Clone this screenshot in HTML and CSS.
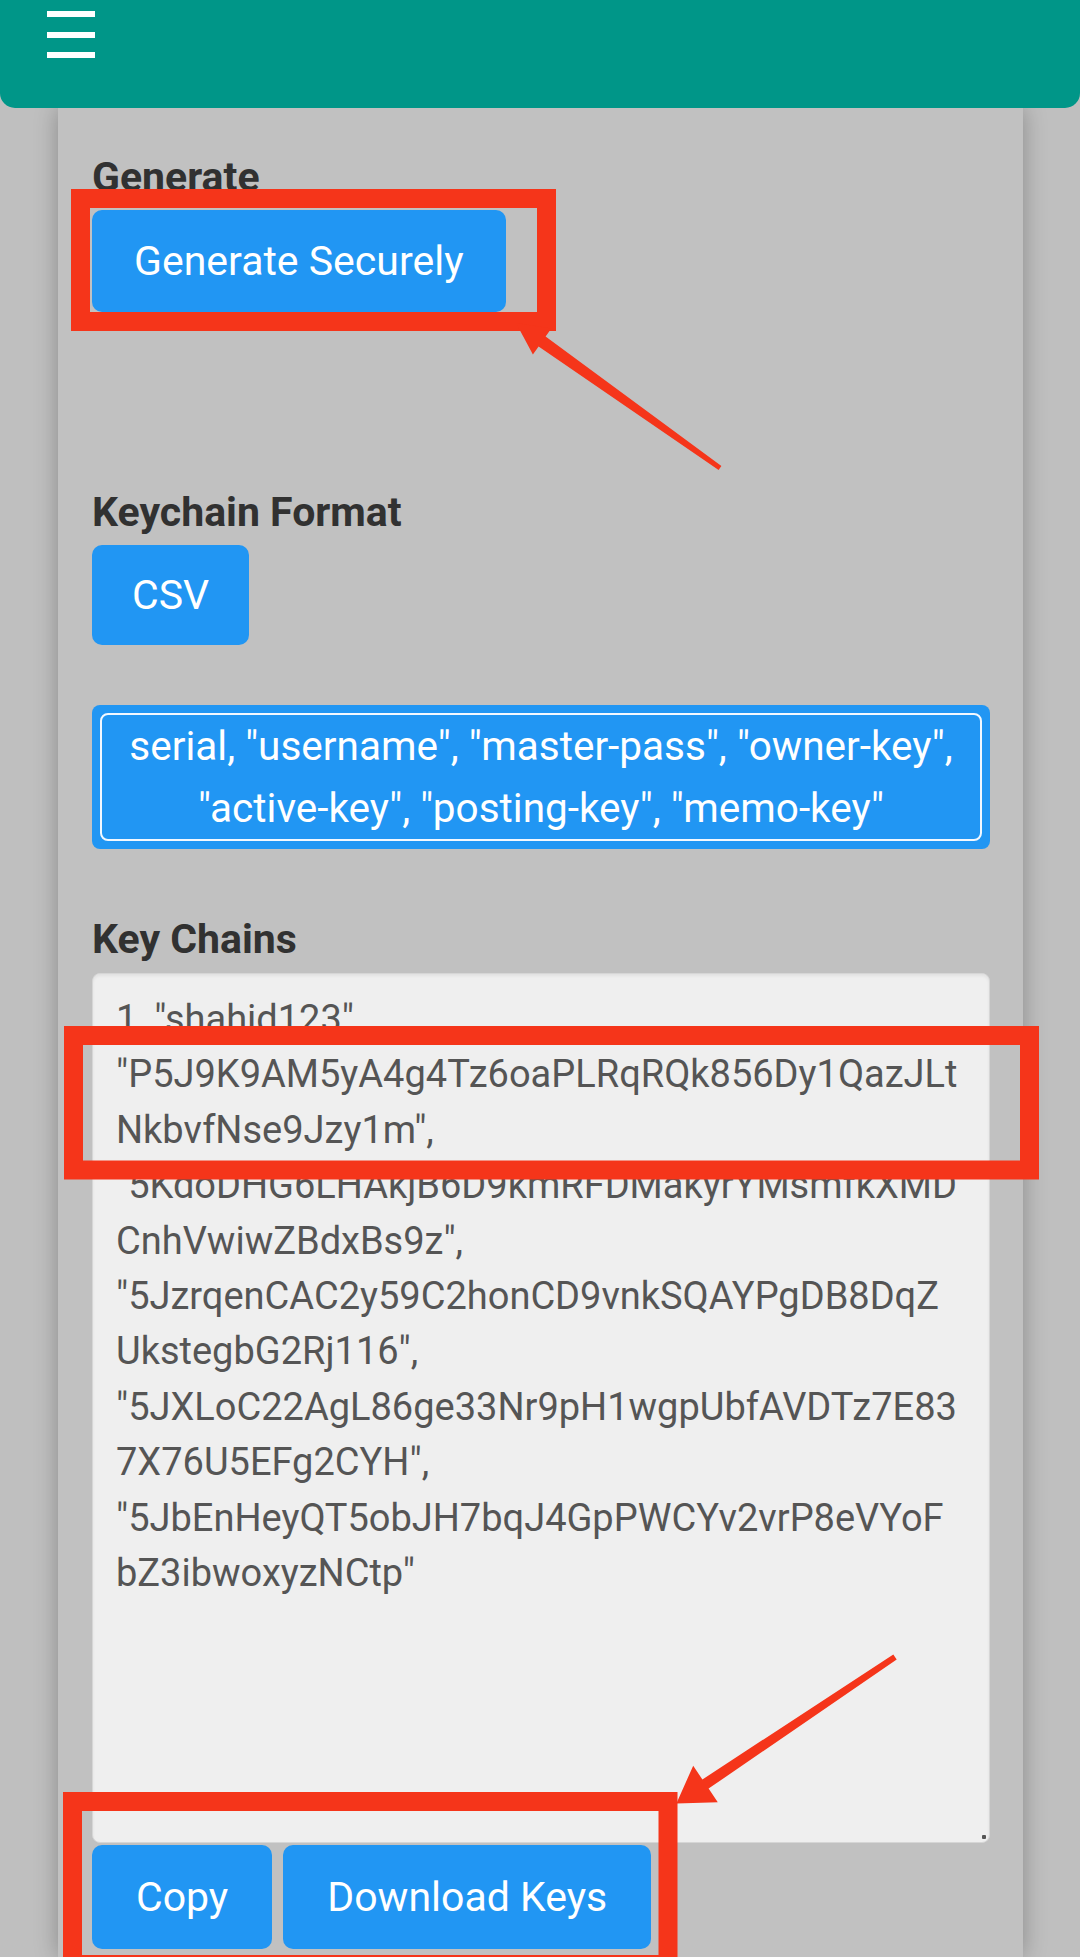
FILE: index.html
```html
<!DOCTYPE html>
<html lang="en">
<head>
<meta charset="utf-8">
<title>Keychain Generator</title>
<link rel="stylesheet" href="styles.css">
</head>
<body>
<header class="topbar">
  <div class="hamburger"><span></span><span></span><span></span></div>
</header>
<main class="card">
  <h2 class="label label-generate">Generate</h2>
  <button class="btn">Generate Securely</button>

  <h2 class="label label-format">Keychain Format</h2>
  <button class="btn btn-csv">CSV</button>

  <div class="format-box">
    <div class="format-inner">serial, "username", "master-pass", "owner-key",<br>"active-key", "posting-key", "memo-key"</div>
  </div>

  <h2 class="label label-chains">Key Chains</h2>
  <div class="keys">
    <div class="line">1, "shahid123"</div>
    <div class="line">"P5J9K9AM5yA4g4Tz6oaPLRqRQk856Dy1QazJLt</div>
    <div class="line">NkbvfNse9Jzy1m",</div>
    <div class="line">"5KdoDHG6LHAkjB6D9kmRFDMakyrYMsmfkXMD</div>
    <div class="line">CnhVwiwZBdxBs9z",</div>
    <div class="line">"5JzrqenCAC2y59C2honCD9vnkSQAYPgDB8DqZ</div>
    <div class="line">UkstegbG2Rj116",</div>
    <div class="line">"5JXLoC22AgL86ge33Nr9pH1wgpUbfAVDTz7E83</div>
    <div class="line">7X76U5EFg2CYH",</div>
    <div class="line">"5JbEnHeyQT5obJH7bqJ4GpPWCYv2vrP8eVYoF</div>
    <div class="line">bZ3ibwoxyzNCtp"</div>
  </div>
  <div class="actions">
    <button class="btn">Copy</button>
    <button class="btn">Download Keys</button>
  </div>
</main>

<svg class="annotations" width="1080" height="1957" viewBox="0 0 1080 1957" aria-hidden="true">
  <g fill="none" stroke="#f5351a" stroke-width="19">
    <rect x="80.5" y="198.5" width="466" height="123"/>
    <rect x="73.5" y="1035.5" width="956" height="134.5"/>
    <rect x="72.5" y="1801.5" width="595.5" height="163"/>
  </g>
  <g fill="#f5351a">
    <polygon points="516,323 551.3,328.4 545.6,336.6 721.4,466 718.6,470 538.6,346.4 532.9,354.6"/>
    <polygon points="676.4,1803.5 717.8,1802.3 708.6,1788.6 896.7,1659.5 893.3,1654.5 702.4,1779.4 693.2,1765.7"/>
  </g>
</svg>
</body>
</html>
```

FILE: styles.css
```css
html, body {
  margin: 0;
  padding: 0;
}

body {
  width: 1080px;
  height: 1957px;
  overflow: hidden;
  position: relative;
  background: #bfbfbf;
  font-family: Roboto, "Noto Sans", "Liberation Sans", sans-serif;
}

.topbar {
  position: relative;
  z-index: 2;
  height: 108px;
  background: #009688;
  border-radius: 0 0 15px 15px;
  box-sizing: border-box;
  padding: 11px 0 0 47px;
}

.hamburger {
  display: flex;
  flex-direction: column;
  gap: 14.5px;
  width: 48px;
}

.hamburger span {
  display: block;
  height: 6px;
  background: #ffffff;
}

.card {
  position: relative;
  z-index: 1;
  margin: 0 57px 0 58px;
  min-height: 1849px;
  box-sizing: border-box;
  padding: 46px 33px 0 34px;
  background: #c1c1c1;
  box-shadow: 0 0 22px rgba(0, 0, 0, 0.28);
}

.label {
  margin: 0;
  font-size: 41px;
  line-height: 46px;
  font-weight: 700;
  color: #313131;
}

.btn {
  display: block;
  height: 102px;
  margin: 10px 0 0 0;
  padding: 0 42px;
  border: none;
  border-radius: 10px;
  background: #2196f3;
  color: #ffffff;
  font-family: Roboto, "Noto Sans", "Liberation Sans", sans-serif;
  font-size: 41px;
  font-weight: 400;
}

.btn-csv {
  height: 100px;
  padding: 0 40px;
}

.label-format {
  margin-top: 177px;
}

.format-box {
  margin-top: 60px;
  padding: 8px;
  background: #2196f3;
  border-radius: 8px;
}

.format-inner {
  border: 2px solid #f2f8ff;
  border-radius: 8px;
  color: #ffffff;
  font-size: 40.5px;
  line-height: 62px;
  text-align: center;
}

.label-chains {
  margin-top: 67px;
}

.keys {
  position: relative;
  margin-top: 11px;
  height: 870px;
  box-sizing: border-box;
  padding: 18px 22px 0 23px;
  background: #efefef;
  border: 1px solid #d6d6d6;
  border-radius: 8px;
  box-shadow: inset 0 2px 3px rgba(0, 0, 0, 0.06);
  color: #555555;
  font-size: 38px;
  line-height: 55.4px;
  white-space: nowrap;
  overflow: hidden;
}

.keys::after {
  content: "";
  position: absolute;
  right: 3px;
  bottom: 3px;
  width: 4px;
  height: 4px;
  background: #555555;
  border-radius: 1px;
}

.actions {
  display: flex;
  gap: 11px;
  margin-top: 2px;
}

.actions .btn {
  margin-top: 0;
  height: 104px;
  padding: 0 44px;
}

.annotations {
  position: absolute;
  left: 0;
  top: 0;
  z-index: 5;
  pointer-events: none;
}
```
